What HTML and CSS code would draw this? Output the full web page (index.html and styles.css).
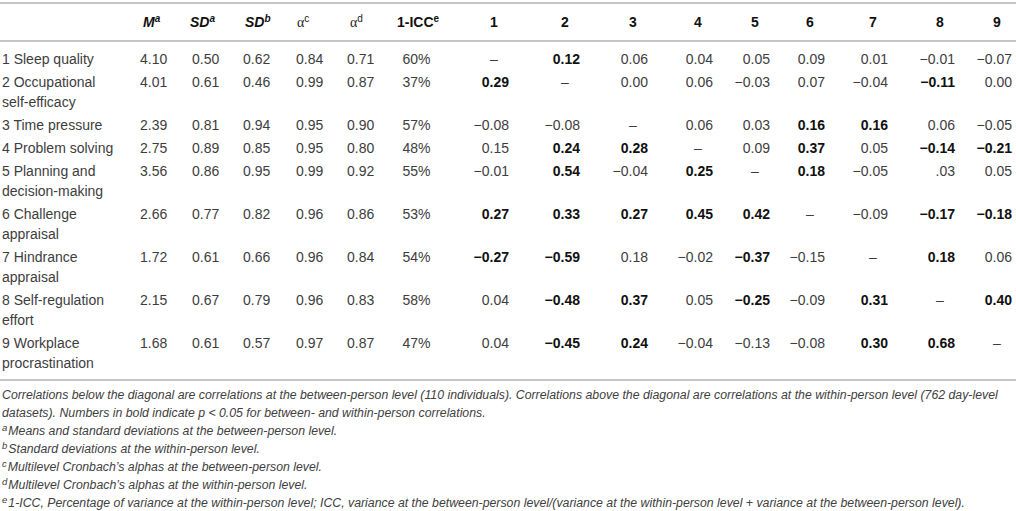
FILE: index.html
```html
<!DOCTYPE html>
<html lang="en">
<head>
<meta charset="utf-8">
<title>Descriptive statistics and correlations</title>
<link rel="stylesheet" href="styles.css">
</head>
<body>
<div class="page">
<table class="stats">
<colgroup>
<col class="w-label"><col class="w-m"><col class="w-sda"><col class="w-sdb"><col class="w-ac"><col class="w-ad"><col class="w-icc">
<col class="w-c1"><col class="w-c2"><col class="w-c3"><col class="w-c4"><col class="w-c5"><col class="w-c6"><col class="w-c7"><col class="w-c8"><col class="w-c9">
</colgroup>
<thead>
<tr>
<th class="lbl"></th>
<th class="d pl0"><i>M</i><sup><i>a</i></sup></th>
<th class="d pln"><i>SD</i><sup><i>a</i></sup></th>
<th class="d pl0"><i>SD</i><sup><i>b</i></sup></th>
<th class="d pl1"><span class="alpha">α</span><sup class="reg">c</sup></th>
<th class="d pl0"><span class="alpha">α</span><sup class="reg">d</sup></th>
<th class="icc">1-ICC<sup>e</sup></th>
<th class="c"><span class="diag">1</span></th>
<th class="c"><span class="diag">2</span></th>
<th class="c"><span class="diag">3</span></th>
<th class="c"><span class="diag">4</span></th>
<th class="c"><span class="diag">5</span></th>
<th class="c"><span class="diag">6</span></th>
<th class="c"><span class="diag">7</span></th>
<th class="c"><span class="diag">8</span></th>
<th class="c"><span class="diag">9</span></th>
</tr>
</thead>
<tbody>
<tr>
<td class="lbl">1 Sleep quality</td>
<td class="d">4.10</td><td class="d pl2">0.50</td><td class="d pl1">0.62</td><td class="d">0.84</td><td class="d">0.71</td><td class="icc">60%</td>
<td class="c"><span class="diag">–</span></td><td class="c"><b>0.12</b></td><td class="c">0.06</td><td class="c">0.04</td><td class="c">0.05</td><td class="c">0.09</td><td class="c">0.01</td><td class="c">−0.01</td><td class="c">−0.07</td>
</tr>
<tr>
<td class="lbl">2 Occupational <span class="nw">self-efficacy</span></td>
<td class="d">4.01</td><td class="d pl2">0.61</td><td class="d pl1">0.46</td><td class="d">0.99</td><td class="d">0.87</td><td class="icc">37%</td>
<td class="c"><b>0.29</b></td><td class="c"><span class="diag">–</span></td><td class="c">0.00</td><td class="c">0.06</td><td class="c">−0.03</td><td class="c">0.07</td><td class="c">−0.04</td><td class="c"><b>−0.11</b></td><td class="c">0.00</td>
</tr>
<tr>
<td class="lbl">3 Time pressure</td>
<td class="d">2.39</td><td class="d pl2">0.81</td><td class="d pl1">0.94</td><td class="d">0.95</td><td class="d">0.90</td><td class="icc">57%</td>
<td class="c">−0.08</td><td class="c">−0.08</td><td class="c"><span class="diag">–</span></td><td class="c">0.06</td><td class="c">0.03</td><td class="c"><b>0.16</b></td><td class="c"><b>0.16</b></td><td class="c">0.06</td><td class="c">−0.05</td>
</tr>
<tr>
<td class="lbl">4 Problem solving</td>
<td class="d">2.75</td><td class="d pl2">0.89</td><td class="d pl1">0.85</td><td class="d">0.95</td><td class="d">0.80</td><td class="icc">48%</td>
<td class="c">0.15</td><td class="c"><b>0.24</b></td><td class="c"><b>0.28</b></td><td class="c"><span class="diag">–</span></td><td class="c">0.09</td><td class="c"><b>0.37</b></td><td class="c">0.05</td><td class="c"><b>−0.14</b></td><td class="c"><b>−0.21</b></td>
</tr>
<tr>
<td class="lbl">5 Planning and <span class="nw">decision-making</span></td>
<td class="d">3.56</td><td class="d pl2">0.86</td><td class="d pl1">0.95</td><td class="d">0.99</td><td class="d">0.92</td><td class="icc">55%</td>
<td class="c">−0.01</td><td class="c"><b>0.54</b></td><td class="c">−0.04</td><td class="c"><b>0.25</b></td><td class="c"><span class="diag">–</span></td><td class="c"><b>0.18</b></td><td class="c">−0.05</td><td class="c">.03</td><td class="c">0.05</td>
</tr>
<tr>
<td class="lbl">6 Challenge appraisal</td>
<td class="d">2.66</td><td class="d pl2">0.77</td><td class="d pl1">0.82</td><td class="d">0.96</td><td class="d">0.86</td><td class="icc">53%</td>
<td class="c"><b>0.27</b></td><td class="c"><b>0.33</b></td><td class="c"><b>0.27</b></td><td class="c"><b>0.45</b></td><td class="c"><b>0.42</b></td><td class="c"><span class="diag">–</span></td><td class="c">−0.09</td><td class="c"><b>−0.17</b></td><td class="c"><b>−0.18</b></td>
</tr>
<tr>
<td class="lbl">7 Hindrance appraisal</td>
<td class="d">1.72</td><td class="d pl2">0.61</td><td class="d pl1">0.66</td><td class="d">0.96</td><td class="d">0.84</td><td class="icc">54%</td>
<td class="c"><b>−0.27</b></td><td class="c"><b>−0.59</b></td><td class="c">0.18</td><td class="c">−0.02</td><td class="c"><b>−0.37</b></td><td class="c">−0.15</td><td class="c"><span class="diag">–</span></td><td class="c"><b>0.18</b></td><td class="c">0.06</td>
</tr>
<tr>
<td class="lbl">8 <span class="nw">Self-regulation</span> effort</td>
<td class="d">2.15</td><td class="d pl2">0.67</td><td class="d pl1">0.79</td><td class="d">0.96</td><td class="d">0.83</td><td class="icc">58%</td>
<td class="c">0.04</td><td class="c"><b>−0.48</b></td><td class="c"><b>0.37</b></td><td class="c">0.05</td><td class="c"><b>−0.25</b></td><td class="c">−0.09</td><td class="c"><b>0.31</b></td><td class="c"><span class="diag">–</span></td><td class="c"><b>0.40</b></td>
</tr>
<tr>
<td class="lbl">9 Workplace procrastination</td>
<td class="d">1.68</td><td class="d pl2">0.61</td><td class="d pl1">0.57</td><td class="d">0.97</td><td class="d">0.87</td><td class="icc">47%</td>
<td class="c">0.04</td><td class="c"><b>−0.45</b></td><td class="c"><b>0.24</b></td><td class="c">−0.04</td><td class="c">−0.13</td><td class="c">−0.08</td><td class="c"><b>0.30</b></td><td class="c"><b>0.68</b></td><td class="c"><span class="diag">–</span></td>
</tr>
</tbody>
</table>
<div class="notes">
<p>Correlations below the diagonal are correlations at the between-person level (110 individuals). Correlations above the diagonal are correlations at the within-person level (762 <span class="nw">day-level</span> datasets). Numbers in bold indicate p &lt; 0.05 for between- and within-person correlations.</p>
<p><sup>a</sup>Means and standard deviations at the between-person level.</p>
<p><sup>b</sup>Standard deviations at the within-person level.</p>
<p><sup>c</sup>Multilevel Cronbach’s alphas at the between-person level.</p>
<p><sup>d</sup>Multilevel Cronbach’s alphas at the within-person level.</p>
<p><sup>e</sup>1-ICC, Percentage of variance at the within-person level; ICC, variance at the between-person level/(variance at the within-person level + variance at the between-person level).</p>
</div>
</div>
</body>
</html>
```
FILE: styles.css
```css
html, body {
  margin: 0;
  padding: 0;
  background: #ffffff;
}

body {
  font-family: "Liberation Sans", Arial, Helvetica, sans-serif;
  color: #3d3d3d;
}

.page {
  padding-top: 2px;
}

.nw {
  white-space: nowrap;
}

.stats {
  width: 1016px;
  border-collapse: collapse;
  table-layout: fixed;
  font-size: 14px;
  line-height: 20px;
}

.w-label { width: 140px; }
.w-m { width: 50px; }
.w-sda { width: 52px; }
.w-sdb { width: 54px; }
.w-ac { width: 51px; }
.w-ad { width: 50px; }
.w-icc { width: 39px; }
.w-c1 { width: 75px; }
.w-c2 { width: 71px; }
.w-c3 { width: 68px; }
.w-c4 { width: 65px; }
.w-c5 { width: 57px; }
.w-c6 { width: 55px; }
.w-c7 { width: 63px; }
.w-c8 { width: 67px; }
.w-c9 { width: 59px; }

.stats th {
  border-top: 2px solid #c6c6c6;
  border-bottom: 2px solid #c6c6c6;
  padding: 7.5px 0;
  font-weight: bold;
  color: #111111;
  text-align: left;
  vertical-align: middle;
  white-space: nowrap;
}

.stats td {
  padding: 1.5px 0;
  vertical-align: top;
  text-align: left;
}

.stats tbody tr:first-child td {
  padding-top: 7px;
}

.stats tbody tr:last-child td {
  padding-bottom: 5.5px;
  border-bottom: 2px solid #c6c6c6;
}

.stats .lbl {
  padding-left: 2px;
  padding-right: 12px;
}

.stats .pl0 { padding-left: 3px; }
.stats .pln { padding-left: 0; }
.stats .pl1 { padding-left: 1px; }
.stats .pl2 { padding-left: 2px; }

.stats .icc {
  text-align: center;
}

.stats .c {
  text-align: right;
  padding-right: 2px;
}

.stats tr > .c:last-child {
  padding-right: 4px;
}

.stats b {
  color: #111111;
}

.diag {
  display: inline-block;
  width: 30px;
  text-align: center;
}

.stats sup {
  font-size: 10px;
  line-height: 0;
  vertical-align: 5px;
}

.stats .alpha {
  font-family: "Liberation Serif", "Times New Roman", serif;
  font-weight: normal;
  font-size: 14px;
  color: #222222;
}

.stats sup.reg {
  font-weight: normal;
  color: #222222;
}

.notes {
  margin-top: 5px;
  padding: 0 2px;
  font-style: italic;
  font-size: 12.3px;
  line-height: 18px;
  color: #404040;
}

.notes p {
  margin: 0;
}

.notes sup {
  font-size: 9.5px;
  line-height: 0;
  vertical-align: 4px;
  margin-right: 1px;
}
```
